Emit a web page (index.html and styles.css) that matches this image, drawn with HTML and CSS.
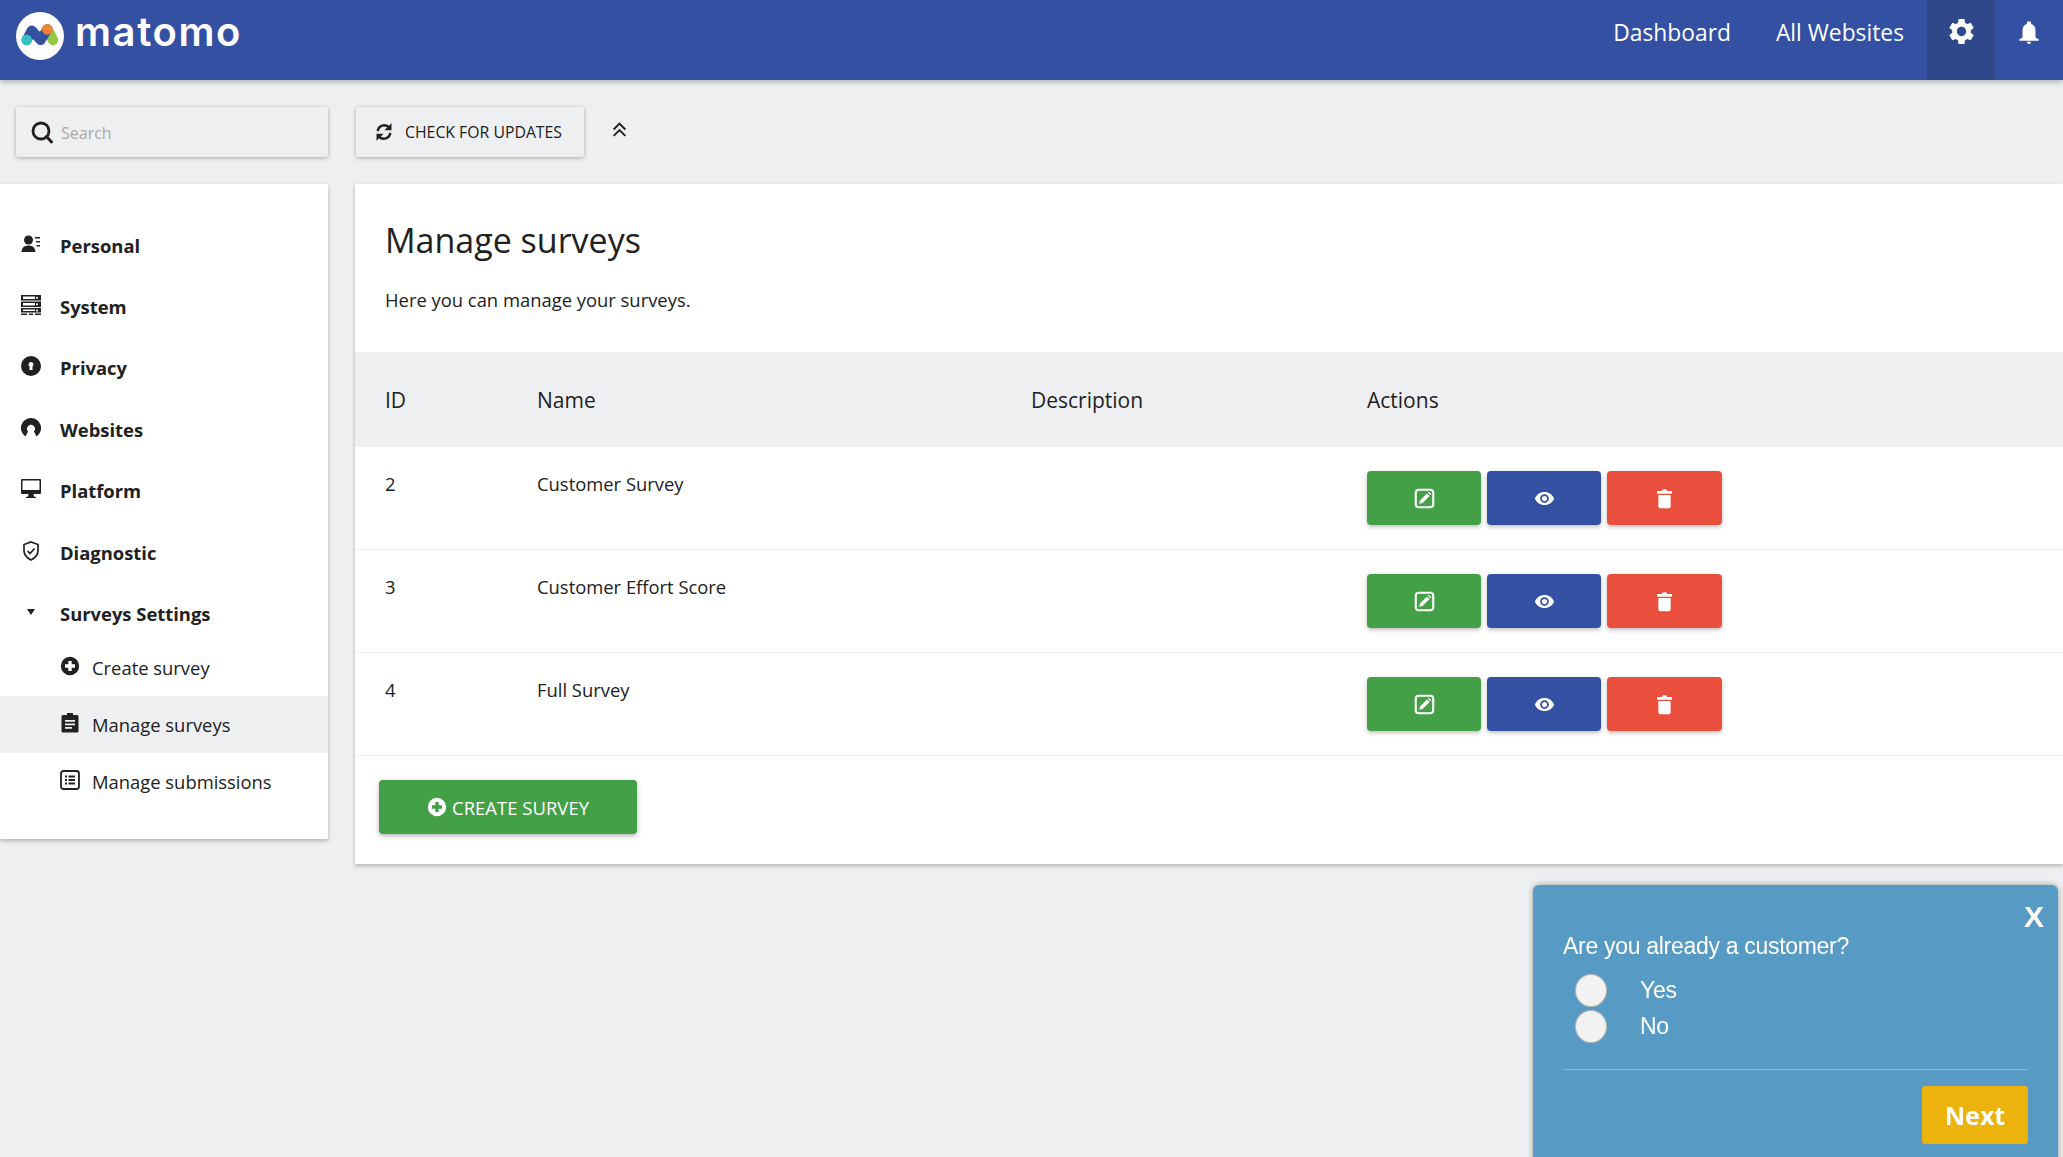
FILE: index.html
```html
<!DOCTYPE html>
<html lang="en">
<head>
    <meta charset="UTF-8">
    <meta name="viewport" content="width=device-width, initial-scale=1.0">
    <link rel="stylesheet" href="styles.css">
    <title>Manage surveys - Matomo</title>
</head>
<body>
    <svg class="sprite" xmlns="http://www.w3.org/2000/svg">
        <symbol id="i-edit" viewBox="0 0 24 24">
            <rect x="2" y="2" width="20" height="20" rx="3.500" fill="none" stroke="currentColor" stroke-width="2.400"/>
            <path fill="currentColor" d="M6 18l.8-3.800 8-8 3 3-8 8zM15.800 5.200l1-1 3 3-1 1z"/>
        </symbol>
        <symbol id="i-eye" viewBox="0 0 24 24">
            <path fill="currentColor" d="M12 4.500C7 4.500 2.730 7.610 1 12c1.730 4.390 6 7.500 11 7.500s9.270-3.110 11-7.500c-1.730-4.390-6-7.500-11-7.500zM12 17c-2.760 0-5-2.240-5-5s2.240-5 5-5 5 2.240 5 5-2.240 5-5 5zm0-8c-1.660 0-3 1.340-3 3s1.340 3 3 3 3-1.340 3-3-1.340-3-3-3z"/>
        </symbol>
        <symbol id="i-trash" viewBox="0 0 24 24">
            <path fill="currentColor" d="M5 8h14v13c0 1.100-.9 2-2 2H7c-1.100 0-2-.9-2-2zM3.500 3.500h5.500l1-2h4l1 2h5.500v3h-17z"/>
        </symbol>
        <symbol id="i-plus" viewBox="0 0 24 24">
            <path fill="currentColor" fill-rule="evenodd" d="M12 1a11 11 0 1 0 0 22 11 11 0 0 0 0-22zM10 6h4v4h4v4h-4v4h-4v-4H6v-4h4z"/>
        </symbol>
    </svg>

    <header class="topbar">
        <a class="logo" href="#">
            <svg class="logo-mark" viewBox="0 0 48 48">
                <circle cx="24" cy="24" r="24" fill="#fff"/>
                <path d="M31.300 17.300L37 28" stroke="#95c748" stroke-width="10.500" stroke-linecap="round"/>
                <path d="M10.700 28L15.700 18.500 24.700 28 31.300 17.300" fill="none" stroke="#3450a3" stroke-width="10" stroke-linecap="round" stroke-linejoin="round"/>
                <circle cx="10.700" cy="28" r="5.400" fill="#35bfc0"/>
                <circle cx="31.300" cy="17.300" r="5.400" fill="#f38334"/>
            </svg>
            <span class="logo-text">matomo</span>
        </a>
        <nav class="topnav">
            <a href="#">Dashboard</a>
            <a href="#">All Websites</a>
            <span class="topicon active">
                <svg class="gear" viewBox="0 0 24 24"><path fill="currentColor" d="M19.140 12.940c.04-.3.06-.61.06-.94 0-.32-.02-.64-.07-.94l2.030-1.580c.18-.14.23-.41.12-.61l-1.920-3.320c-.12-.22-.37-.29-.59-.22l-2.390.96c-.5-.38-1.030-.7-1.620-.94l-.36-2.540c-.04-.24-.24-.41-.48-.41h-3.840c-.24 0-.43.17-.47.41l-.36 2.540c-.59.24-1.130.57-1.620.94l-2.390-.96c-.22-.08-.47 0-.59.22L2.740 8.870c-.12.21-.08.47.12.61l2.030 1.580c-.05.3-.09.63-.09.94s.02.64.07.94l-2.030 1.580c-.18.14-.23.41-.12.61l1.920 3.320c.12.22.37.29.59.22l2.390-.96c.5.38 1.030.7 1.620.94l.36 2.540c.05.24.24.41.48.41h3.840c.24 0 .44-.17.47-.41l.36-2.540c.59-.24 1.130-.56 1.620-.94l2.390.96c.22.08.47 0 .59-.22l1.920-3.320c.12-.22.07-.47-.12-.61l-2.010-1.580zM12 15.600c-1.980 0-3.600-1.620-3.600-3.600s1.620-3.600 3.600-3.600 3.600 1.620 3.600 3.600-1.620 3.600-3.600 3.600z"/></svg>
            </span>
            <span class="topicon">
                <svg class="bell" viewBox="0 0 24 24"><path fill="currentColor" d="M12 23c1.100 0 2-.9 2-2h-4c0 1.100.89 2 2 2zm6-6v-6c0-3.070-1.140-5.640-4-6.320V3.500c0-.83-.9-1.500-2-1.500s-2 .67-2 1.500v1.180C7.130 5.360 6 7.920 6 11v6l-3 2v1h18v-1z"/></svg>
            </span>
        </nav>
    </header>

    <div class="toolbar">
        <label class="search">
            <svg viewBox="0 0 24 24"><circle cx="11" cy="11" r="8" fill="none" stroke="currentColor" stroke-width="2.800"/><path d="M16.500 16.500L21.500 22" stroke="currentColor" stroke-width="3" stroke-linecap="round"/></svg>
            <span>Search</span>
        </label>
        <button class="check-btn">
            <svg viewBox="0 0 24 24"><path fill="none" stroke="currentColor" stroke-width="3" d="M4.500 11A7.800 7.800 0 0 1 18 6.500M19.500 13A7.800 7.800 0 0 1 6 17.500"/><path fill="currentColor" d="M21 1.500V10h-8.500zM3 22.500V14h8.500z"/></svg>
            CHECK FOR UPDATES
        </button>
        <svg class="collapse" viewBox="0 0 16 16"><path fill="none" stroke="currentColor" stroke-width="1.800" d="M2.500 8L8 2.500 13.500 8M2.500 14L8 8.500l5.500 5.500"/></svg>
    </div>

    <div class="layout">
        <aside class="sidebar">
            <a class="menu-item" href="#">
                <svg viewBox="0 0 20 20"><circle cx="7.500" cy="6" r="4.500" fill="currentColor"/><path fill="currentColor" d="M.5 18c.3-4.500 3-6.500 7-6.500s6.700 2 7 6.500zM14 3h5v1.500h-5zM15 7h4v1.500h-4zM15.500 11H19v1.500h-3.500z"/></svg>
                Personal
            </a>
            <a class="menu-item" href="#">
                <svg viewBox="0 0 20 20"><path fill="currentColor" fill-rule="evenodd" d="M0 0h20v5.500H0zM2 1.500v2.500h12V1.500zM16 1.800a1 1 0 1 0 .01 0zM0 6.500h20V12H0zM2 8v2.500h12V8zM16 8.300a1 1 0 1 0 .01 0zM0 13h20v4.500H0zM2 14.500V16h12v-1.500zM16 14.500a1 1 0 1 0 .01 0zM0 18.500h6V20H0zM8 18.500h4V20H8zM14 18.500h6V20h-6z"/></svg>
                System
            </a>
            <a class="menu-item" href="#">
                <svg viewBox="0 0 20 20"><path fill="currentColor" fill-rule="evenodd" d="M10 0a10 10 0 1 0 0 20 10 10 0 0 0 0-20zM10 6a2.500 2.500 0 0 1 1.500 4.500V14h-3v-3.500A2.500 2.500 0 0 1 10 6z"/></svg>
                Privacy
            </a>
            <a class="menu-item" href="#">
                <svg viewBox="0 0 20 20"><path fill="currentColor" fill-rule="evenodd" d="M10 0a10 10 0 0 1 5.500 18.400L13 13.500a4 4 0 1 0-6 0L4.500 18.400A10 10 0 0 1 10 0z"/></svg>
                Websites
            </a>
            <a class="menu-item" href="#">
                <svg viewBox="0 0 20 20"><path fill="currentColor" d="M1 0h18a1 1 0 0 1 1 1v13a1 1 0 0 1-1 1h-6.500l.5 2.500 2 .5v1H5v-1l2-.5.5-2.500H1a1 1 0 0 1-1-1V1a1 1 0 0 1 1-1zm.5 1.500V11h17V1.500z"/></svg>
                Platform
            </a>
            <a class="menu-item" href="#">
                <svg viewBox="0 0 20 20"><path fill="none" stroke="currentColor" stroke-width="1.700" d="M10 1l7 2.500v6c0 4.500-3 7.500-7 9.500-4-2-7-5-7-9.500v-6z"/><path fill="none" stroke="currentColor" stroke-width="1.700" d="M6.500 10l2.500 2.500 4.500-5"/></svg>
                Diagnostic
            </a>
            <a class="menu-item menu-open" href="#">
                <svg viewBox="0 0 20 20"><path fill="currentColor" d="M6 7h8l-4 6z"/></svg>
                Surveys Settings
            </a>
            <a class="sub-item" href="#">
                <svg><use href="#i-plus"/></svg>
                Create survey
            </a>
            <a class="sub-item current" href="#">
                <svg viewBox="0 0 20 20"><path fill="currentColor" fill-rule="evenodd" d="M7 2V0h6v2h4a1.500 1.500 0 0 1 1.500 1.500V18a1.500 1.500 0 0 1-1.500 1.500H3A1.500 1.500 0 0 1 1.500 18V3.500A1.500 1.500 0 0 1 3 2zM5 7v1.700h10V7zM5 10.500v1.700h10v-1.700zM5 14v1.700h7V14z"/></svg>
                Manage surveys
            </a>
            <a class="sub-item" href="#">
                <svg viewBox="0 0 20 20"><rect x="1" y="1" width="18" height="18" rx="2.500" fill="none" stroke="currentColor" stroke-width="1.800"/><path fill="currentColor" d="M5 5.500h2v2H5zM8.500 5.500H15v2H8.500zM5 9h2v2H5zM8.500 9H15v2H8.500zM5 12.500h2v2H5zM8.500 12.500H15v2H8.500z"/></svg>
                Manage submissions
            </a>
        </aside>

        <main class="content">
            <h1>Manage surveys</h1>
            <p class="lead">Here you can manage your surveys.</p>
            <table class="surveys">
                <thead>
                    <tr>
                        <th class="col-id">ID</th>
                        <th class="col-name">Name</th>
                        <th class="col-desc">Description</th>
                        <th>Actions</th>
                    </tr>
                </thead>
                <tbody>
                    <tr>
                        <td>2</td>
                        <td>Customer Survey</td>
                        <td></td>
                        <td class="actions">
                            <a class="act green" href="#"><svg><use href="#i-edit"/></svg></a>
                            <a class="act blue" href="#"><svg class="eye"><use href="#i-eye"/></svg></a>
                            <a class="act red" href="#"><svg><use href="#i-trash"/></svg></a>
                        </td>
                    </tr>
                    <tr>
                        <td>3</td>
                        <td>Customer Effort Score</td>
                        <td></td>
                        <td class="actions">
                            <a class="act green" href="#"><svg><use href="#i-edit"/></svg></a>
                            <a class="act blue" href="#"><svg class="eye"><use href="#i-eye"/></svg></a>
                            <a class="act red" href="#"><svg><use href="#i-trash"/></svg></a>
                        </td>
                    </tr>
                    <tr>
                        <td>4</td>
                        <td>Full Survey</td>
                        <td></td>
                        <td class="actions">
                            <a class="act green" href="#"><svg><use href="#i-edit"/></svg></a>
                            <a class="act blue" href="#"><svg class="eye"><use href="#i-eye"/></svg></a>
                            <a class="act red" href="#"><svg><use href="#i-trash"/></svg></a>
                        </td>
                    </tr>
                </tbody>
            </table>
            <a class="create-btn" href="#"><svg><use href="#i-plus"/></svg>CREATE SURVEY</a>
        </main>
    </div>

    <div class="popup">
        <span class="popup-close">X</span>
        <p class="question">Are you already a customer?</p>
        <div class="option"><span class="radio"></span>Yes</div>
        <div class="option"><span class="radio"></span>No</div>
        <div class="popup-foot">
            <button class="next-btn">Next</button>
        </div>
    </div>
</body>
</html>
```

FILE: styles.css
```css
* {
    box-sizing: border-box;
}
html, body {
    height: 100%;
}
body {
    margin: 0;
    background-color: #eeeff1;
    color: #212121;
    font-family: "Open Sans", "Noto Sans", sans-serif;
    overflow: hidden;
}
a {
    color: inherit;
    text-decoration: none;
}
.sprite {
    display: none;
}

/* top bar */
.topbar {
    display: flex;
    justify-content: space-between;
    height: 80px;
    background-color: #3450a3;
    color: #fff;
    box-shadow: 0 2px 5px rgba(0, 0, 0, .25);
}
.logo {
    display: flex;
    align-items: flex-start;
    padding: 12px 0 0 16px;
}
.logo-mark {
    width: 48px;
    height: 48px;
}
.logo-text {
    margin: -12px 0 0 11px;
    font-family: "Inter", sans-serif;
    font-size: 40px;
    font-weight: 600;
    line-height: 64px;
    letter-spacing: 1.6px;
}
.topnav {
    display: flex;
    align-items: flex-start;
}
.topnav a {
    margin-right: 45px;
    font-size: 22.8px;
    line-height: 66px;
}
.topnav a:nth-child(2) {
    margin-right: 23px;
}
.topicon {
    display: flex;
    justify-content: center;
    width: 68px;
    height: 80px;
    padding-top: 19px;
}
.topicon .gear {
    width: 31px;
    height: 31px;
    margin-top: -3px;
}
.topicon .bell {
    width: 26px;
    height: 26px;
}
.topicon.active {
    background-color: #2e4889;
}

/* search row */
.toolbar {
    display: flex;
    align-items: flex-start;
    padding: 27px 0 27px 16px;
}
.search {
    display: flex;
    align-items: center;
    width: 312px;
    height: 50px;
    padding: 2px 0 0 14px;
    border-radius: 2px;
    color: #212121;
    box-shadow: 0 1px 4px rgba(0, 0, 0, .3);
}
.search svg {
    width: 24px;
    height: 24px;
    margin-top: -2px;
}
.search span {
    margin-left: 7px;
    color: #a9a9a9;
    font-size: 16px;
}
.check-btn {
    display: flex;
    align-items: center;
    width: 228px;
    height: 50px;
    margin-left: 28px;
    padding: 0 0 0 18px;
    border: none;
    border-radius: 2px;
    background-color: #eeeff1;
    color: #212121;
    font-family: inherit;
    font-size: 15.8px;
    box-shadow: 0 1px 4px rgba(0, 0, 0, .3);
}
.check-btn svg {
    width: 20px;
    height: 20px;
    margin-right: 11px;
}
.collapse {
    width: 17px;
    height: 17px;
    margin: 14px 0 0 27px;
}

/* sidebar + content */
.layout {
    display: flex;
    align-items: flex-start;
    gap: 27px;
}
.sidebar {
    width: 328px;
    height: 655px;
    padding-top: 30.5px;
    background-color: #fff;
    box-shadow: 0 2px 4px rgba(0, 0, 0, .25);
}
.menu-item {
    display: flex;
    align-items: center;
    height: 61.4px;
    padding-left: 21px;
    font-size: 18.4px;
    font-weight: 700;
}
.menu-item svg {
    flex: none;
    width: 20px;
    height: 20px;
    margin-top: -3px;
    margin-right: 19px;
}
.menu-open {
    margin-bottom: -5.5px;
}
.sub-item {
    display: flex;
    align-items: center;
    height: 57px;
    padding-left: 60px;
    font-size: 18.4px;
}
.sub-item svg {
    flex: none;
    width: 20px;
    height: 20px;
    margin-top: -2px;
    margin-right: 12px;
}
.sub-item.current {
    background-color: #eeeff1;
}

.content {
    flex: 1;
    height: 680px;
    background-color: #fff;
    box-shadow: 0 2px 4px rgba(0, 0, 0, .25);
}
h1 {
    margin: 0;
    padding: 31px 0 0 30px;
    font-size: 34px;
    font-weight: 400;
    line-height: 50px;
}
.lead {
    margin: 0;
    padding: 20px 0 0 30px;
    font-size: 18.4px;
    line-height: 30px;
}
.surveys {
    width: 100%;
    margin-top: 37px;
    border-collapse: collapse;
    table-layout: fixed;
    font-size: 18.4px;
}
.surveys th {
    height: 95px;
    padding: 0 0 0 30px;
    background-color: #eeeff1;
    font-size: 21px;
    font-weight: 400;
    text-align: left;
}
.surveys .col-id {
    width: 152px;
}
.surveys .col-name {
    width: 494px;
}
.surveys .col-desc {
    width: 336px;
}
.surveys td {
    height: 102.9px;
    padding: 24px 0 0 30px;
    border-bottom: 1px solid #eeeff1;
    vertical-align: top;
}
.surveys td.actions {
    padding-top: 24px;
    font-size: 0;
}
.act {
    display: inline-flex;
    justify-content: center;
    align-items: center;
    width: 114px;
    height: 54px;
    margin-right: 6px;
    border-radius: 4px;
    color: #fff;
    vertical-align: top;
    box-shadow: 0 2px 4px rgba(0, 0, 0, .25);
}
.act svg {
    width: 21px;
    height: 21px;
}
.act svg.eye {
    width: 21px;
    height: 21px;
}
.green {
    background-color: #43a047;
}
.blue {
    background-color: #3450a3;
}
.red {
    width: 115px;
    background-color: #ea4f3d;
}
.create-btn {
    display: inline-flex;
    justify-content: center;
    align-items: center;
    width: 258px;
    height: 54px;
    margin: 24px 0 0 24px;
    border-radius: 4px;
    background-color: #43a047;
    color: #fff;
    font-size: 18.5px;
    box-shadow: 0 2px 5px rgba(0, 0, 0, .3);
}
.create-btn svg {
    width: 20px;
    height: 20px;
    margin-right: 5px;
}

/* survey popup */
.popup {
    position: fixed;
    top: 885px;
    left: 1533px;
    width: 525px;
    height: 290px;
    padding: 0 30px;
    border-radius: 6px 6px 0 0;
    background-color: #579ac4;
    color: #fff;
    font-family: "Liberation Sans", Arial, sans-serif;
    box-shadow: 0 0 6px rgba(0, 0, 0, .35);
}
.popup-close {
    position: absolute;
    top: 15px;
    right: 14px;
    font-size: 30px;
    font-weight: 700;
}
.question {
    margin: 0 0 10px;
    padding-top: 45px;
    font-size: 23px;
    line-height: 32px;
    letter-spacing: -.3px;
}
.option {
    display: flex;
    align-items: center;
    height: 36.6px;
    padding-left: 12px;
    font-size: 23px;
    letter-spacing: -.3px;
}
.radio {
    width: 32px;
    height: 33px;
    margin-right: 33px;
    border: 1px solid #bdb7b2;
    border-radius: 50%;
    background-color: #f2f2f2;
}
.popup-foot {
    margin-top: 24px;
    padding-top: 16px;
    border-top: 1px solid #e0b020;
    text-align: right;
}
.next-btn {
    width: 106px;
    height: 58px;
    border: none;
    border-radius: 3px;
    background-color: #ebb30c;
    color: #fff;
    font-family: "Open Sans", sans-serif;
    font-size: 25px;
    font-weight: 700;
}
```
